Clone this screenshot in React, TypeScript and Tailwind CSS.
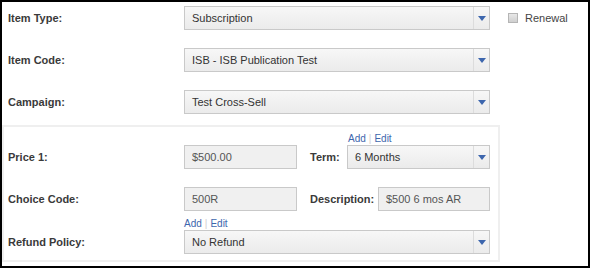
import { ReactNode } from 'react'

// dropdown styled like the old ext-style combo box
function Select({ value, width }: { value: string; width: string }) {
  return (
    <div
      className={`${width} h-[24px] flex items-stretch border border-[#c9c9c9] bg-gradient-to-b from-[#f7f7f7] to-[#ebebeb]`}
    >
      <div className="flex-1 flex items-center pl-[7px] text-[11px] text-[#333]">{value}</div>
      <div className="w-[16px] flex items-center justify-center border-l border-[#dcdcdc]">
        <svg width="8" height="5" viewBox="0 0 8 5">
          <path d="M0 0h8L4 5z" fill="#3d66ad" />
        </svg>
      </div>
    </div>
  )
}

function TextInput({ value, width }: { value: string; width: string }) {
  return (
    <div
      className={`${width} h-[24px] flex items-center pl-[7px] border border-[#c9c9c9] bg-[#f0f0f0] text-[11px] text-[#555]`}
    >
      {value}
    </div>
  )
}

function Label({ children, width }: { children: ReactNode; width: string }) {
  return (
    <div className={`${width} h-[24px] flex items-center font-bold text-[11px] text-[#3a3a3a]`}>
      {children}
    </div>
  )
}

function AddEdit({ className = '' }: { className?: string }) {
  return (
    <div className={`h-[14px] flex items-center text-[10px] text-[#3d66ad] ${className}`}>
      <span>Add</span>
      <span className="mx-[3px] text-[#d0d0d0]">|</span>
      <span>Edit</span>
    </div>
  )
}

export default function App() {
  return (
    <div
      className="w-[590px] h-[268px] border-2 border-black bg-white text-[#333]"
      style={{ fontFamily: '"Liberation Sans", Arial, sans-serif' }}
    >
      <div className="pt-[4px]">
        <div className="flex items-center">
          <Label width="w-[182px] pl-[6px]">Item Type:</Label>
          <Select value="Subscription" width="w-[306px]" />
          <div className="ml-[18px] flex items-center">
            <div className="w-[10px] h-[10px] border border-[#b5b5b5] bg-gradient-to-b from-[#e8e8e8] to-[#cfcfcf]" />
            <span className="ml-[7px] text-[11px] text-[#444]">Renewal</span>
          </div>
        </div>
        <div className="flex items-center mt-[18px]">
          <Label width="w-[182px] pl-[6px]">Item Code:</Label>
          <Select value="ISB - ISB Publication Test" width="w-[306px]" />
        </div>
        <div className="flex items-center mt-[18px]">
          <Label width="w-[182px] pl-[6px]">Campaign:</Label>
          <Select value="Test Cross-Sell" width="w-[306px]" />
        </div>
      </div>

      <div className="mt-[11px] w-[498px] h-[137px] border-2 border-[#efefef] pt-[4px]">
        <div className="flex items-end">
          <Label width="w-[180px] pl-[4px]">Price 1:</Label>
          <TextInput value="$500.00" width="w-[113px]" />
          <Label width="w-[37px] ml-[13px]">Term:</Label>
          <div className="flex flex-col">
            <AddEdit className="pl-[1px]" />
            <Select value="6 Months" width="w-[143px]" />
          </div>
        </div>
        <div className="flex items-center mt-[18px]">
          <Label width="w-[180px] pl-[4px]">Choice Code:</Label>
          <TextInput value="500R" width="w-[113px]" />
          <Label width="w-[68px] ml-[13px]">Description:</Label>
          <TextInput value="$500 6 mos AR" width="w-[112px]" />
        </div>
        <div className="flex items-end mt-[5px]">
          <Label width="w-[180px] pl-[4px]">Refund Policy:</Label>
          <div className="flex flex-col">
            <AddEdit />
            <Select value="No Refund" width="w-[306px]" />
          </div>
        </div>
      </div>
    </div>
  )
}
